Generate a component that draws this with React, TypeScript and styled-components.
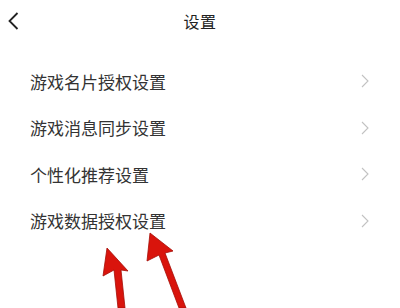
import React from "react";
import styled, { createGlobalStyle } from "styled-components";

const GlobalStyle = createGlobalStyle`
  html, body {
    margin: 0;
    padding: 0;
    background: #fff;
  }
  body {
    font-family: "Noto Sans CJK SC", "Noto Sans", sans-serif;
  }
`;

const items = [
  "游戏名片授权设置",
  "游戏消息同步设置",
  "个性化推荐设置",
  "游戏数据授权设置",
];

export default function App() {
  return (
    <Page>
      <GlobalStyle />
      <Header>
        <BackButton aria-label="返回">
          <svg width="12" height="18" viewBox="0 0 12 18">
            <path d="M10.5 1 L2.5 9 L10.5 17" fill="none" stroke="#222" strokeWidth="1.8" />
          </svg>
        </BackButton>
        <Title>设置</Title>
      </Header>
      <List>
        {items.map((label) => (
          <Row key={label}>
            <Label>{label}</Label>
            <svg width="8" height="14" viewBox="0 0 8 14">
              <path d="M1 1 L7 7 L1 13" fill="none" stroke="#c2c2c2" strokeWidth="1.1" />
            </svg>
          </Row>
        ))}
      </List>
      <Arrows width="400" height="308" viewBox="0 0 400 308">
        <g fill="#d9140c" stroke="#a50d06" strokeWidth="0.8" strokeLinejoin="round">
          <path d="M107 248 L128 271 L121 270 L125 308 L118 308 L114 270 L103 276 Z" />
          <path d="M150 233 L173 251 L165 253 L186 308 L179 308 L159 255 L147 261 Z" />
        </g>
      </Arrows>
    </Page>
  );
}

const Page = styled.div`
  position: relative;
  width: 400px;
  height: 308px;
  overflow: hidden;
  background: #fff;
`;

const Header = styled.header`
  position: relative;
  height: 42px;
  display: flex;
  align-items: center;
  justify-content: center;
`;

const BackButton = styled.div`
  position: absolute;
  left: 7px;
  top: 12px;
  display: flex;
`;

const Title = styled.h1`
  margin: 0;
  font-size: 16px;
  font-weight: 400;
  color: #222;
  letter-spacing: 0.5px;
`;

const List = styled.div`
  padding-top: 16px;
`;

const Row = styled.div`
  height: 46.5px;
  display: flex;
  align-items: center;
  justify-content: space-between;
  padding: 0 31px 0 30px;
`;

const Label = styled.span`
  font-size: 17px;
  color: #333;
`;

const Arrows = styled.svg`
  position: absolute;
  left: 0;
  top: 0;
  pointer-events: none;
`;
